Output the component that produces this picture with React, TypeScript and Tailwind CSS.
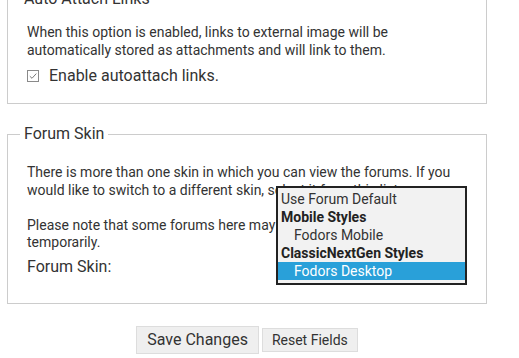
import React from 'react'

const options = [
  { label: 'Use Forum Default', kind: 'option', indent: false },
  { label: 'Mobile Styles', kind: 'group', indent: false },
  { label: 'Fodors Mobile', kind: 'option', indent: true },
  { label: 'ClassicNextGen Styles', kind: 'group', indent: false },
  { label: 'Fodors Desktop', kind: 'selected', indent: true },
]

function CheckBox() {
  return (
    <svg width="12" height="12" viewBox="0 0 12 12" className="shrink-0">
      <rect x="0.5" y="0.5" width="11" height="11" fill="white" stroke="#8a8a8a" />
      <path d="M2.8 6.2 L5 8.3 L9.3 3.6" fill="none" stroke="#7a7a7a" strokeWidth="1" />
    </svg>
  )
}

export default function App() {
  return (
    <div className="relative w-[519px] h-[358px] overflow-hidden bg-white font-['Roboto',sans-serif] text-[#333]">
      <div className="-mt-[13px] ml-[7px] w-[480px]">
        {/* Auto attach */}
        <fieldset className="border border-[#ccc] px-[12px] pb-[15px]">
          <legend className="px-[4px] text-[16px] leading-[24px]">Auto Attach Links</legend>
          <div className="pl-[7px]">
            <p className="mt-[13px] text-[14px] leading-[17.5px]">
              When this option is enabled, links to external image will be automatically stored as
              attachments and will link to them.
            </p>
            <label className="flex items-center gap-[10px] mt-[5px] text-[16px] leading-[24px]">
              <CheckBox />
              <span>Enable autoattach links.</span>
            </label>
          </div>
        </fieldset>

        {/* Forum skin */}
        <fieldset className="mt-[18px] border border-[#ccc] px-[12px] pb-[24px]">
          <legend className="px-[4px] text-[16px] leading-[24px]">Forum Skin</legend>
          <div className="pl-[7px]">
            <p className="mt-[18px] text-[14px] leading-[17.5px]">
              There is more than one skin in which you can view the forums. If you
              <br />
              would like to switch to a different skin, select it from this list.
              <br />
              <br />
              Please note that some forums here may override your choice
              <br />
              temporarily.
            </p>
            <div className="mt-[3.5px] text-[16px] leading-[24px]">Forum Skin:</div>
          </div>
        </fieldset>

        <div className="flex justify-center items-center gap-[3px] mt-[22px]">
          <button className="h-[28px] px-[10px] border border-[#ddd] bg-[#efefef] text-[16px]">
            Save Changes
          </button>
          <button className="h-[24px] px-[9px] border border-[#ddd] bg-[#efefef] text-[14px]">
            Reset Fields
          </button>
        </div>
      </div>

      {/* open select list */}
      <div className="absolute left-[276px] top-[186px] w-[191px] border-2 border-[#222] bg-[#f2f2f2] pt-[2px] pb-[3px] text-[14px]">
        {options.map((o) => (
          <div
            key={o.label}
            className={
              'h-[18px] leading-[18px] pr-[4px] ' +
              (o.indent ? 'pl-[16px] ' : 'pl-[3px] ') +
              (o.kind === 'group' ? 'font-bold text-[#222] ' : '') +
              (o.kind === 'selected' ? 'bg-[#29a0d9] text-white' : '')
            }
          >
            {o.label}
          </div>
        ))}
      </div>
    </div>
  )
}
